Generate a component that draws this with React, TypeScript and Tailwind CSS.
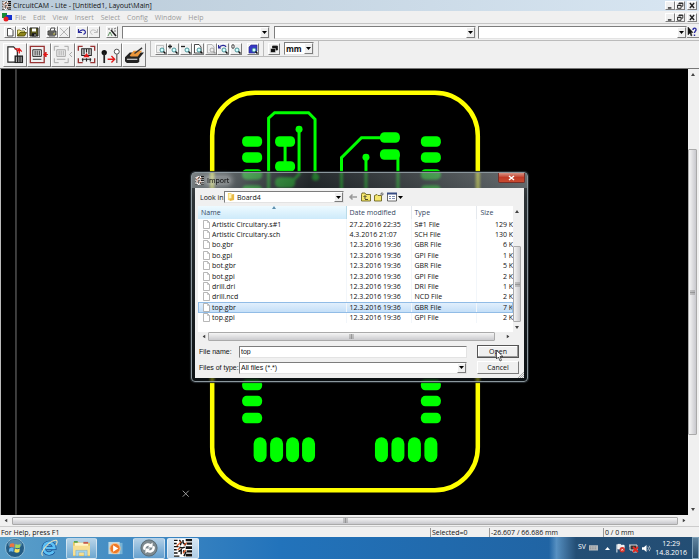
import type { ReactNode } from 'react';

const raised =
  'border border-t-white border-l-white border-b-[#7d7d7d] border-r-[#7d7d7d] bg-[#f0f0f0]';
const sunken =
  'border border-t-[#7d7d7d] border-l-[#7d7d7d] border-b-[#e3e3e3] border-r-[#e3e3e3] bg-white';

const menus = ['File', 'Edit', 'View', 'Insert', 'Select', 'Config', 'Window', 'Help'];

const files = [
  ['Artistic Circuitary.s#1', '27.2.2016 22:35', 'S#1 File', '129 K'],
  ['Artistic Circuitary.sch', '4.3.2016 21:07', 'SCH File', '130 K'],
  ['bo.gbr', '12.3.2016 19:36', 'GBR File', '6 K'],
  ['bo.gpi', '12.3.2016 19:36', 'GPI File', '1 K'],
  ['bot.gbr', '12.3.2016 19:36', 'GBR File', '5 K'],
  ['bot.gpi', '12.3.2016 19:36', 'GPI File', '2 K'],
  ['drill.dri', '12.3.2016 19:36', 'DRI File', '1 K'],
  ['drill.ncd', '12.3.2016 19:36', 'NCD File', '2 K'],
  ['top.gbr', '12.3.2016 19:36', 'GBR File', '7 K'],
  ['top.gpi', '12.3.2016 19:36', 'GPI File', '2 K'],
];

function ToolButton({ label, big, children }: { label: string; big?: boolean; children: ReactNode }) {
  return (
    <button
      type="button"
      aria-label={label}
      className={`flex items-center justify-center ${raised} ${big ? 'h-6' : 'h-3 w-3'}`}
    >
      {children}
    </button>
  );
}

function Glyph({ children, size = 'h-[10px] w-[10px]' }: { children: ReactNode; size?: string }) {
  return (
    <svg viewBox="0 0 10 10" className={`shrink-0 ${size}`} fill="none" stroke="#222" strokeWidth="0.8" aria-hidden="true">
      {children}
    </svg>
  );
}

function DropDown({
  label,
  id,
  value,
  className,
  textClass = '',
}: {
  label?: string;
  id?: string;
  value: string;
  className: string;
  textClass?: string;
}) {
  return (
    <div className={`relative flex ${sunken} ${className}`}>
      <select
        id={id}
        aria-label={label}
        className={`h-full w-full appearance-none bg-transparent outline-none ${textClass}`}
      >
        <option>{value}</option>
      </select>
      <span
        className={`pointer-events-none absolute inset-y-0 right-0 flex w-[9px] items-center justify-center ${raised}`}
      >
        <svg viewBox="0 0 5 3" className="h-[3px] w-[5px]" aria-hidden="true">
          <path d="M0 0H5L2.5 3Z" />
        </svg>
      </span>
    </div>
  );
}

function WindowButtons() {
  return (
    <div className="flex">
      <button type="button" aria-label="Minimize" className={`flex h-[9px] w-[10px] ${raised}`}>
        <Glyph size="h-[7px] w-[8px]">
          <path d="M2 8.5H7" strokeWidth="2" />
        </Glyph>
      </button>
      <button type="button" aria-label="Restore" className={`flex h-[9px] w-[10px] ${raised}`}>
        <Glyph size="h-[7px] w-[8px]">
          <path d="M3.5 3V1.5H9V6H7M1.5 4.5H6.5V9H1.5ZM1.5 5H6.5M3.5 2H9" strokeWidth="1.3" />
        </Glyph>
      </button>
      <button type="button" aria-label="Close" className={`ml-[2px] flex h-[9px] w-[10px] ${raised}`}>
        <Glyph size="h-[7px] w-[8px]">
          <path d="M2 1.5L8 8.5M8 1.5L2 8.5" strokeWidth="2" />
        </Glyph>
      </button>
    </div>
  );
}

function AppIcon({ className }: { className: string }) {
  return (
    <svg viewBox="0 0 20 20" className={`shrink-0 ${className}`} aria-hidden="true">
      <path fill="#fff" d="M0 0H20V20H0Z" />
      <path
        d="M0 1.500H4M0 5H3M0 8.500H5M0 12H3M0 15.500H4M0 19H6M6 1L8 4L7 7M10 1V4L13 7M6 9L9 10L12 9M5 14L8 12V17M10 13L13 15L11 19"
        stroke="#111"
        strokeWidth="1.600"
        fill="none"
      />
      <path
        fill="#111"
        d="M13 0H20V2.500H13ZM14 4H20V6.500H14ZM13 8H20V11H13ZM14 12.500H20V15H14ZM13 16.500H20V19.500H13Z"
      />
      <path d="M3 8L8 3M4 12L7 10M10 16L13 12M11 7L14 4" stroke="#d9531e" strokeWidth="1.300" />
    </svg>
  );
}

function Magnifier({ children, muted }: { children?: ReactNode; muted?: boolean }) {
  return (
    <Glyph>
      {children}
      <circle cx="6" cy="6" r="2" stroke={muted ? '#999' : '#2b7d83'} fill={muted ? '#eee' : '#d5ffff'} />
      <path d="M7.500 7.500L9.500 9.500" strokeWidth="1.500" stroke={muted ? '#999' : '#111'} />
    </Glyph>
  );
}

function Board() {
  const sideRows = [141, 157, 174, 190, 385, 401, 418];
  return (
    <svg viewBox="0 69 688 446" className="block h-full w-full" aria-label="Layout">
      <path d="M15 69V515" stroke="#777" />
      <rect x="211.500" y="92.500" width="266" height="398" rx="43" fill="none" stroke="#ff0" strokeWidth="4.500" />
      <g fill="#0f0">
        {sideRows.map((y) => (
          <g key={y}>
            <rect x="241.500" y={y - 5} width="20" height="10.500" rx="4.500" />
            <rect x="420.500" y={y - 5} width="20" height="10.500" rx="4.500" />
          </g>
        ))}
        {[141, 166, 182].map((y) => (
          <rect key={y} x="274.500" y={y - 5} width="20" height="10.500" rx="4.500" />
        ))}
        {[137, 154].map((y) => (
          <rect key={y} x="379.500" y={y - 5} width="20" height="10.500" rx="4.500" />
        ))}
        {[259.5, 276, 292, 308, 381, 397.5, 414, 430.5].map((x) => (
          <rect key={x} x={x - 6.5} y="437.500" width="13" height="25" rx="6.500" />
        ))}
        <circle cx="298.500" cy="129" r="3.500" />
        <circle cx="315" cy="177" r="3.500" />
        <circle cx="365.500" cy="157" r="3.500" />
      </g>
      <g fill="none" stroke="#0f0" strokeWidth="3">
        <path d="M268 190V118L274 112.500H308L314.500 119V177" />
        <path d="M298.500 129V174L290 183M284.500 141V166" />
        <path d="M341 190V157.500L361 137.500H384M365.500 157V190M397.500 155V190" />
      </g>
      <path d="M182 491L188 497M188 491L182 497" stroke="#aaa" strokeWidth="0.900" />
    </svg>
  );
}

function Grip({ upright }: { upright?: boolean }) {
  return (
    <svg viewBox="0 0 5 5" className={`h-[5px] w-[5px] ${upright ? 'rotate-90' : ''}`} aria-hidden="true">
      <path d="M0 1H5M0 2.500H5M0 4H5" stroke="#777" strokeWidth="0.700" />
    </svg>
  );
}

function Arrow({ turn, tint = '#444' }: { turn: string; tint?: string }) {
  return (
    <svg viewBox="0 0 4 3" className={`h-[3px] w-[4px] shrink-0 ${turn}`} aria-hidden="true">
      <path d="M0 3H4L2 0Z" fill={tint} />
    </svg>
  );
}

function ImportDialog() {
  return (
    <section
      role="dialog"
      aria-label="Import"
      className="absolute top-[172px] left-[191px] flex w-[337px] flex-col rounded-[4px] border border-[#8b979d] bg-linear-to-b from-[#b5c0c6]/40 via-[#59656c]/50 via-12% to-[#11181c]/70 px-[3px] pb-[3px] shadow-[0_0_1px_1px_#252b30] backdrop-blur-[1px]"
    >
      <header className="-mx-[3px] flex h-[15px] items-center rounded-t-[3px] bg-linear-to-r from-[#aeb7ba]/50 via-[#060b0e]/50 via-35% to-[#8b9295]/50 pl-[3px]">
        <AppIcon className="h-[9px] w-[9px]" />
        <h2 className="ml-[1px] rounded-full bg-white/25 px-[2px] text-[7px] leading-[9px] text-black shadow-[0_0_4px_2px_rgba(255,255,255,0.25)]">
          Import
        </h2>
        <button
          type="button"
          aria-label="Close import"
          className="mr-[2px] mb-auto ml-auto flex h-[10px] w-[27px] items-center justify-center rounded-b-[2px] border border-t-0 border-[#772e28] bg-linear-to-b from-[#d79184] via-[#c03a27] to-[#c94b30]"
        >
          <svg viewBox="0 0 7 6" className="h-[6px] w-[7px]" aria-hidden="true">
            <path d="M1 1L6 5M6 1L1 5" stroke="#fff" strokeWidth="1.500" />
          </svg>
        </button>
      </header>

      <div className="relative flex flex-col bg-[#f0f0f0] px-[3px] pt-[3px] pb-1">
        <div className="flex h-3 items-center">
          <label htmlFor="folder" className="w-[26px] pl-[2px] whitespace-nowrap">
            Look in:
          </label>
          <div className="relative">
            <DropDown id="folder" value="Board4" className="h-3 w-[120px]" textClass="pl-3" />
            <svg viewBox="0 0 9 9" className="pointer-events-none absolute top-[2px] left-[3px] h-2 w-2" aria-hidden="true">
              <path d="M1 0H5V8H1Z" fill="#f6d873" />
              <path d="M3 2L8 1V8L3 9Z" fill="#e7b944" />
              <path d="M2 1H5V6H2Z" fill="#fff2b5" />
            </svg>
          </div>
          <div className="ml-1 flex items-center gap-[3px]">
            <button type="button" aria-label="Back" className="h-[10px] w-[10px]">
              <Glyph>
                <path d="M9 5H2M4.500 2.500L2 5L4.500 7.500" stroke="#999" strokeWidth="1.500" />
              </Glyph>
            </button>
            <button type="button" aria-label="Up one level" className="h-[10px] w-[10px]">
              <Glyph>
                <path d="M.5 2.500V9H9.500V2.500H5L4 1H1Z" fill="#f5e66e" stroke="#5b5310" />
                <path d="M4 7V4M2.500 5L4 3.500L5.500 5M4 7.500H7" />
              </Glyph>
            </button>
            <button type="button" aria-label="New folder" className="h-[10px] w-[10px]">
              <Glyph>
                <path d="M.5 3.500V9H7.500V3.500H4L3 2.500Z" fill="#f5e66e" stroke="#5b5310" />
                <path d="M8 0V4M6 2H10M7 1L9 3" stroke="#777" strokeWidth="0.800" />
              </Glyph>
            </button>
            <button type="button" aria-label="Views" className="flex h-[10px] items-center gap-[1px]">
              <Glyph>
                <path d="M.5 1.500H9.500V9H.5Z" fill="#fff" stroke="#444" />
                <path d="M0 1.500H10" stroke="#394d84" strokeWidth="2" />
                <path d="M2 4.500H4M5 4.500H8M2 6.500H4M5 6.500H8" stroke="#60709d" />
              </Glyph>
              <svg viewBox="0 0 5 3" className="h-[3px] w-[5px]" aria-hidden="true">
                <path d="M0 0H5L2.500 3Z" />
              </svg>
            </button>
          </div>
        </div>

        <div className="mt-[3px] flex bg-white">
          <div className="min-w-0 flex-1 overflow-hidden">
            <table className="h-[117px] w-full table-fixed border-collapse text-[7px] leading-[9px] text-[#111]">
              <thead>
                <tr className="h-[13px] text-[#33455e]">
                  <th className="relative w-[148px] border-r border-[#b9dbe8] bg-linear-to-b from-[#eefaff] to-[#cdeafa] p-0 pl-[3px] text-left font-normal">
                    Name
                    <span className="absolute top-0 left-1/2 flex">
                      <Arrow turn="" tint="#5d8fae" />
                    </span>
                  </th>
                  <th className="w-[65px] border-r border-[#e5e9ee] p-0 pl-[3px] text-left font-normal whitespace-nowrap">
                    Date modified
                  </th>
                  <th className="w-[65px] border-r border-[#e5e9ee] p-0 pl-[3px] text-left font-normal">Type</th>
                  <th className="p-0 pl-1 text-left font-normal">Size</th>
                </tr>
              </thead>
              <tbody>
                {files.map(([name, date, type, size]) => (
                  <tr
                    key={name}
                    className={
                      name === 'top.gbr'
                        ? 'bg-linear-to-b from-[#e5f1fd] to-[#c4dff8] outline outline-[#91bce6] -outline-offset-1'
                        : ''
                    }
                  >
                    <td className="border-r border-[#f2f6fa] p-0 pl-[5px]">
                      <span className="flex items-center gap-[2px] whitespace-nowrap">
                        <svg viewBox="0 0 7 9" className="h-[9px] w-[7px] shrink-0" aria-hidden="true">
                          <path d="M.5 .5H4.500L6.500 2.500V8.500H.5Z" fill="#fff" stroke="#a5a5a5" strokeWidth="0.800" />
                          <path d="M4.500 .5V2.500H6.500" fill="none" stroke="#a5a5a5" strokeWidth="0.600" />
                        </svg>
                        {name}
                      </span>
                    </td>
                    <td className="border-r border-[#f2f6fa] p-0 pl-[3px] whitespace-nowrap">{date}</td>
                    <td className="border-r border-[#f2f6fa] p-0 pl-[3px] whitespace-nowrap">{type}</td>
                    <td className="p-0 text-right whitespace-nowrap">{size}</td>
                  </tr>
                ))}
              </tbody>
            </table>
          </div>
          <div className="flex w-2 flex-col items-center bg-[#f0f0f0] pt-1">
            <Arrow turn="" />
            <div className="mt-[33px] flex h-[76px] w-2 items-center justify-center rounded-[1px] border border-[#aaa] bg-linear-to-r from-[#f5f5f5] to-[#cbcbce]">
              <Grip />
            </div>
            <div className="mt-1 mb-[3px] flex">
              <Arrow turn="rotate-180" />
            </div>
          </div>
        </div>
        <div className="flex h-[9px] items-center pl-1">
          <Arrow turn="-rotate-90" />
          <div className="ml-[2px] flex h-[9px] w-[287px] items-center justify-center rounded-[1px] border border-[#aaa] bg-linear-to-b from-[#f5f5f5] to-[#cbcbce]">
            <Grip upright />
          </div>
          <span className="ml-[11px] flex">
            <Arrow turn="rotate-90" />
          </span>
        </div>

        <div className="mt-1 flex h-[13px] items-center">
          <label htmlFor="filename" className="w-[41px] pl-[1px] font-['Liberation_Sans',sans-serif] whitespace-nowrap">
            File name:
          </label>
          <input
            id="filename"
            defaultValue="top"
            className={`h-3 w-[228px] px-[1px] font-['Liberation_Sans',sans-serif] outline-none ${sunken}`}
          />
          <button
            type="button"
            className="ml-[10px] h-[13px] w-[42px] border border-[#555] bg-[#f0f0f0] text-[7px] leading-[9px] shadow-[inset_-1px_-1px_0_#999,inset_1px_1px_0_#fff]"
          >
            Open
          </button>
        </div>
        <div className="mt-[3px] flex h-[13px] items-center">
          <label htmlFor="filetype" className="w-[41px] pl-[1px] font-['Liberation_Sans',sans-serif] whitespace-nowrap">
            Files of type:
          </label>
          <DropDown
            id="filetype"
            value="All files (*.*)"
            className="h-3 w-[228px]"
            textClass="pl-[1px] font-['Liberation_Sans',sans-serif]"
          />
          <button type="button" className={`ml-[10px] h-[13px] w-[42px] text-[7px] leading-[9px] ${raised}`}>
            Cancel
          </button>
        </div>
        <svg viewBox="0 0 6 6" className="absolute right-0 bottom-0 h-[6px] w-[6px]" aria-hidden="true">
          <path d="M0 6L6 0M2 6L6 2M4 6L6 4" stroke="#999" strokeWidth="0.800" />
        </svg>
      </div>
    </section>
  );
}

function MainToolbar() {
  return (
    <div className="flex h-[17px] items-center border-t border-[#c5c5c5] pl-1">
      <ToolButton label="New">
        <Glyph>
          <path d="M2.500 1.500H6L8 3.500V9H2.500Z" fill="#fff" />
        </Glyph>
      </ToolButton>
      <ToolButton label="Open file">
        <Glyph>
          <path d="M.5 9V3H3L4 4H7.500V5.500" fill="#efe88c" stroke="#6d6810" />
          <path d="M.5 9L3 5.500H9.500L7.500 9Z" fill="#8e8519" stroke="#494500" />
          <path d="M5 2L7 1L9 3" />
        </Glyph>
      </ToolButton>
      <ToolButton label="Save">
        <Glyph>
          <path d="M1 1H9V9H1Z" fill="#5d5b1b" strokeWidth="1" />
          <path d="M3 1.500H7V4.500H3Z" fill="#fff" stroke="none" />
          <path d="M3 6.500H7V9H3Z" fill="#111" />
          <path d="M6 7V9" stroke="#ddd" />
        </Glyph>
      </ToolButton>
      <span className="w-[6px]" />
      <ToolButton label="Print">
        <Glyph>
          <path d="M3 4L4 1H8L7 4" fill="#fff" />
          <path d="M1 4H9V8H1Z" fill="#8a8a84" />
          <path d="M2 9H8M2 6H7" />
          <path d="M6 7H8" stroke="#e2d743" />
        </Glyph>
      </ToolButton>
      <ToolButton label="Delete">
        <Glyph>
          <path d="M1 1L9 9M9 1L1 9" stroke="#a5a5a5" />
        </Glyph>
      </ToolButton>
      <span className="w-[6px]" />
      <ToolButton label="Undo">
        <Glyph>
          <path d="M1.500 2V5.500H5M2 5C4 2.500 8 2 8.500 5C8.500 6.500 7.500 7 6.500 7.500" stroke="#29299b" strokeWidth="1.200" />
        </Glyph>
      </ToolButton>
      <ToolButton label="Redo">
        <Glyph>
          <path d="M8.500 2V5.500H5M8 5C6 2.500 2 2 1.500 5C1.500 6.500 2.500 7 3.500 7.500" stroke="#b1b1b1" />
        </Glyph>
      </ToolButton>
      <span className="w-[6px]" />
      <ToolButton label="Wizard">
        <Glyph>
          <path d="M4 3L9 9" strokeWidth="1.600" />
          <path d="M1 9L3 5L5 9" stroke="#3a793a" />
          <path d="M1 2H3M5 1V3M7 2L9 1M7 4H9" stroke="#555" />
        </Glyph>
      </ToolButton>
      <DropDown label="Layer" value="" className="ml-1 h-[13px] w-[148px]" />
      <DropDown label="Aperture" value="" className="ml-1 h-[13px] w-[202px]" />
      <DropDown label="Tool" value="" className="ml-[2px] h-[13px] min-w-0 flex-1" />
      <button type="button" aria-label="Context help" className="flex h-3 w-3 items-center border-b border-[#888] bg-[#f0f0f0]">
        <Glyph>
          <path d="M1 0V8L3 6L4 9L5 8.500L4 5.500H6Z" fill="#111" strokeWidth="0.500" />
          <path d="M6 3C6 0 9.500 1 9 3C8.500 4.500 7.500 4.500 7.500 6M7.500 7.500V9" stroke="#2a2aa0" strokeWidth="1.400" />
        </Glyph>
      </button>
    </div>
  );
}

function ViewToolbar() {
  return (
    <div className="flex h-[29px] border-y border-t-[#bbb] border-b-[#777]">
      <div className="grid w-[146px] grid-cols-6 items-center pl-[3px]">
        <ToolButton label="Import file" big>
          <Glyph size="h-[19px] w-[19px]">
            <path d="M1.500 1H4.500L6.500 3V9H1.500Z" fill="#fff" strokeWidth="0.600" />
            <path d="M5 5.500H9.500V9.500H5Z" fill="#222" stroke="none" />
            <path d="M6 6.200V9M7.300 6.200V9M8.500 6.200V9" stroke="#eee" strokeWidth="0.400" />
            <path d="M5 2H7.500V4.500M6.300 3.500L7.500 2L8.800 3.500" stroke="#e31919" strokeWidth="0.700" />
          </Glyph>
        </ToolButton>
        <ToolButton label="Board outline" big>
          <Glyph size="h-[19px] w-[19px]">
            <path d="M.7 .7H8V9.300H.7Z" stroke="#993434" strokeWidth="0.700" />
            <path d="M2 2.500H6.500V6H2ZM3.200 3V5.500M4.300 3V5.500M5.400 3V5.500M2 7.500H6.500" strokeWidth="0.500" />
            <path d="M10 5H8M9 3.700L7.700 5L9 6.300Z" fill="#e31919" stroke="#e31919" strokeWidth="0.500" />
          </Glyph>
        </ToolButton>
        <ToolButton label="Contour routing" big>
          <Glyph size="h-[19px] w-[19px]">
            <path
              d="M3 .7H.7V3M.7 7V9.300H3M6 .7H8V3M8 7V9.300H6M2 2.500H6.500V6H2ZM3.200 3V5.500M4.300 3V5.500M5.400 3V5.500M2 7.500H6.500M10 3.700L8.700 5L10 6.300"
              stroke="#a5a5a5"
              strokeWidth="0.500"
            />
          </Glyph>
        </ToolButton>
        <ToolButton label="Insulate" big>
          <Glyph size="h-[19px] w-[19px]">
            <path d="M3 .7H.7V3M.7 7V9.300H3M7 .7H9.300V3M9.300 7V9.300H7" stroke="#993434" strokeWidth="0.700" />
            <path d="M2.500 2H7.500V5.500H2.500ZM3.700 2V5M5 2V4M6.300 2V5M2.500 7.500H7.500M3 7V8.700M7 7V8.700M5 7V8.700" strokeWidth="0.600" />
            <path d="M3.300 6.500L5 4.200L6.700 6.500Z" fill="#e31919" stroke="none" />
          </Glyph>
        </ToolButton>
        <ToolButton label="Convert layer" big>
          <Glyph size="h-[19px] w-[19px]">
            <circle cx="1.700" cy="4" r="1.400" fill="#111" stroke="none" />
            <path d="M1.700 4V9.500" strokeWidth="0.900" />
            <circle cx="8.300" cy="3.500" r="1.300" strokeWidth="0.400" fill="#fff" />
            <path d="M8.300 4.800V9.500" stroke="#777" strokeWidth="0.800" />
            <path d="M3.500 7.500H7M5.500 5.800L7.200 7.500L5.500 9.200" stroke="#e31919" strokeWidth="0.700" />
          </Glyph>
        </ToolButton>
        <ToolButton label="Export to plotter" big>
          <Glyph size="h-[19px] w-[19px]">
            <path d="M0 6.500L2.500 4H10L7.500 7V9L6.500 9.500H1L0 8.500Z" fill="#222" stroke="none" />
            <path d="M2.500 5.500L4.500 3H9L6.700 6H3Z" fill="#e9953a" stroke="none" />
            <path d="M5 4.500L9 1.500" stroke="#333" strokeWidth="0.700" />
            <path d="M1 7.500H6.500" stroke="#fff" strokeWidth="0.500" />
          </Glyph>
        </ToolButton>
      </div>
      <div className="ml-1 flex h-4 items-center border-r border-b border-l border-[#bbb] pr-1 pl-1">
        <div className="grid w-[87px] grid-cols-7">
          <ToolButton label="Zoom window">
            <Magnifier>
              <path d="M.5 1.500H7.500V8.500H.5Z" stroke="#aaa" strokeWidth="0.700" />
            </Magnifier>
          </ToolButton>
          <ToolButton label="Zoom in">
            <Magnifier>
              <path d="M0 2.500H4M2 .5V4.500" strokeWidth="1.300" />
            </Magnifier>
          </ToolButton>
          <ToolButton label="Zoom out">
            <Magnifier>
              <path d="M0 2.500H4" strokeWidth="1.300" />
            </Magnifier>
          </ToolButton>
          <ToolButton label="Zoom page">
            <Magnifier>
              <path d="M1.500 .5H6L8 3V9H1.500Z" fill="#fff" />
            </Magnifier>
          </ToolButton>
          <ToolButton label="Zoom selection">
            <Magnifier muted>
              <path d="M1.500 .5H6L8 3V9H1.500Z" stroke="#aaa" />
            </Magnifier>
          </ToolButton>
          <ToolButton label="Zoom previous">
            <Magnifier>
              <path d="M.5 1V4H3M1 3.500C3 1 7 .5 8 3" stroke="#29299b" strokeWidth="1.200" />
            </Magnifier>
          </ToolButton>
          <ToolButton label="Zoom original">
            <Magnifier>
              <ellipse cx="2" cy="2.500" rx="1.200" ry="2" />
            </Magnifier>
          </ToolButton>
        </div>
        <span className="w-[5px]" />
        <ToolButton label="Redraw">
          <Magnifier>
            <path d="M1 3L3 1H9V7L7 9H1Z" fill="#3939c5" stroke="#25258c" strokeWidth="0.600" />
          </Magnifier>
        </ToolButton>
        <span className="mx-1 h-full border-l border-[#bbb]" />
        <ToolButton label="Layers">
          <Glyph>
            <path d="M3.500 2H8.500V6H3.500Z" fill="#111" />
            <path d="M1.500 4.500H6.500V8.500H1.500Z" fill="#111" stroke="#f0f0f0" strokeWidth="0.500" />
          </Glyph>
        </ToolButton>
        <DropDown label="Units" value="mm" className="ml-1 h-[13px] w-[30px]" textClass="pl-[1px] text-[8px] font-bold leading-[9px]" />
      </div>
    </div>
  );
}

function Taskbar() {
  const lit =
    'flex h-[21px] items-center justify-center rounded-[2px] border border-white/50 bg-linear-to-b';
  return (
    <footer className="flex h-[22px] shrink-0 items-center bg-linear-to-r from-[#5b9fc9] via-[#2273bb] via-40% to-[#1f5c97] text-white">
      <button type="button" aria-label="Start" className="ml-1 flex h-[21px] w-[22px] items-center justify-center">
        <svg viewBox="0 0 20 20" className="h-5 w-5" aria-hidden="true">
          <circle cx="10" cy="10" r="9.500" fill="#245d85" stroke="#a1c9df" strokeWidth="0.800" />
          <ellipse cx="10" cy="6" rx="7" ry="4.500" fill="#79abc9" opacity=".6" />
          <path d="M5 6Q7.500 4.500 9.500 6L9 9.500Q7 8 4.500 9.500Z" fill="#ee7540" />
          <path d="M10.500 6Q13 7.500 15.500 6L15 9.500Q12.500 11 10 9.500Z" fill="#a9d95a" />
          <path d="M4.300 10.500Q6.500 9 8.800 10.500L8.300 14Q6 12.500 3.800 14Z" fill="#69b5ee" />
          <path d="M9.800 10.500Q12.500 12 14.800 10.500L14.300 14Q12 15.500 9.300 14Z" fill="#fae15d" />
        </svg>
      </button>
      <button type="button" aria-label="Internet Explorer" className="ml-3 flex h-[21px] w-[21px] items-center justify-center">
        <svg viewBox="0 0 20 20" className="h-[18px] w-[18px]" fill="none" aria-hidden="true">
          <path d="M15 13.500A6 6 0 1 1 16 10H6" stroke="#174f93" strokeWidth="4.500" />
          <path d="M15 13.500A6 6 0 1 1 16 10H6" stroke="#5cc0f5" strokeWidth="3" />
          <path d="M3 18.500C-1 15 11 1 18 1.500C20 2.500 18.500 5.500 17.500 7" stroke="#e8e3c0" strokeWidth="1.200" />
        </svg>
      </button>
      <button type="button" aria-label="Explorer" className={`ml-[7px] w-[31px] from-white/60 to-white/20 ${lit}`}>
        <svg viewBox="0 0 20 18" className="h-[17px] w-[19px]" aria-hidden="true">
          <path d="M1 2H7L8 3H19V17H1Z" fill="#e7c967" />
          <path d="M3 3H17V9H3Z" fill="#fff5c9" />
          <path d="M2 1H6V3H2ZM8 2H12" fill="#57a553" />
          <path d="M12 2H17V4H12Z" fill="#c4594b" />
          <path d="M1 6H19V16H1Z" fill="#f8df91" />
          <path d="M4 17V11H16V17H13V13H7V17Z" fill="#a3d5ef" stroke="#6ba6c9" strokeWidth="0.500" />
        </svg>
      </button>
      <button type="button" aria-label="Media Player" className="ml-[7px] flex h-[21px] w-[21px] items-center justify-center">
        <svg viewBox="0 0 18 16" className="h-[15px] w-[18px]" aria-hidden="true">
          <path d="M5 2H17V14H5Z" fill="#79b4d6" />
          <path d="M2 1H14V14H2Z" fill="#bdd9e6" />
          <circle cx="9" cy="8" r="5.500" fill="#ee7927" stroke="#fcc58d" />
          <path d="M7 4.500L12.500 8L7 11.500Z" fill="#fff" />
        </svg>
      </button>
      <button type="button" aria-label="Sync" className={`ml-2 w-8 from-white/60 to-white/20 ${lit}`}>
        <svg viewBox="0 0 20 20" className="h-[18px] w-[18px]" aria-hidden="true">
          <circle cx="10" cy="10" r="9" fill="#7d898f" stroke="#55666f" />
          <path d="M3.500 11C3 6 8 3 12 5.500L14 4V9.500H8.500L10.500 7.500C8 7 6 8.500 6 11.500C5.500 12.500 4 12.500 3.500 11Z" fill="#fff" />
          <path d="M16.500 9C17 14 12 17 8 14.500L6 16V10.500H11.500L9.500 12.500C12 13 14 11.500 14 8.500C14.500 7.500 16 7.500 16.500 9Z" fill="#fff" />
        </svg>
      </button>
      <button type="button" aria-label="CircuitCAM" className={`ml-[2px] w-8 from-white/80 to-white/60 ${lit}`}>
        <AppIcon className="h-[18px] w-[18px]" />
      </button>
      <div className="ml-auto flex h-full w-[150px] items-center bg-linear-to-r from-transparent via-[#8dbce0]/50 via-5% to-[#244c70]/90 to-18% pl-[29px]">
        <span className="mb-[3px]">SV</span>
        <svg viewBox="0 0 10 8" className="mb-[2px] ml-[3px] h-2 w-[9px]" aria-hidden="true">
          <path d="M5 2V0M0 2H10V8H0Z" fill="#b8bdc0" />
          <path d="M1 4H9M1 6H9" stroke="#666" strokeWidth="0.800" strokeDasharray="1 1" />
        </svg>
        <span className="ml-[7px] flex">
          <svg viewBox="0 0 5 3" className="h-[3px] w-[5px]" aria-hidden="true">
            <path d="M0 3H5L2.500 0Z" fill="#fff" />
          </svg>
        </span>
        <svg viewBox="0 0 10 10" className="ml-[6px] h-[10px] w-[9px]" aria-hidden="true">
          <path d="M1 1V10M2 1H5L6 2H9V6H2Z" stroke="#fff" fill="#eee" />
          <circle cx="7" cy="7" r="3" fill="#d3352c" />
          <path d="M6 6L8 8M8 6L6 8" stroke="#fff" strokeWidth="0.800" />
        </svg>
        <svg viewBox="0 0 10 10" className="ml-1 h-[10px] w-[10px]" aria-hidden="true">
          <path d="M1 2H8V7H1ZM0 1V4M4 7V9H8" stroke="#ddd" fill="#333" />
          <path d="M4 4L9 9M9 4L4 9" stroke="#e42922" strokeWidth="1.800" />
        </svg>
        <svg viewBox="0 0 10 10" className="ml-[3px] h-[9px] w-[9px]" aria-hidden="true">
          <path d="M0 3.500H2L5 1V9L2 6.500H0Z" fill="#fff" />
          <path d="M6.500 3Q8 5 6.500 7M8 2Q10.500 5 8 8" stroke="#ddd" fill="none" strokeWidth="0.800" />
        </svg>
        <time className="ml-auto flex flex-col items-center">
          <span>12:29</span>
          <span>14.8.2016</span>
        </time>
        <button
          type="button"
          aria-label="Show desktop"
          className="ml-[5px] h-[22px] w-[7px] shrink-0 border border-[#7da0b8] bg-linear-to-b from-[#8aa8bb]/60 to-[#294e6b]"
        />
      </div>
    </footer>
  );
}

export default function App() {
  return (
    <div className="relative flex h-screen flex-col overflow-hidden bg-[#f0f0f0] font-['Open_Sans',sans-serif] text-[7px] leading-[9px] text-[#111]">
      <header className="flex h-[11px] shrink-0 items-center justify-between bg-linear-to-r from-[#b9cad8] to-[#d8e6f2] pr-[2px] pl-[2px]">
        <div className="flex items-center gap-[2px]">
          <AppIcon className="h-[9px] w-[9px]" />
          <h1>CircuitCAM - Lite - [Untitled1, Layout\Main]</h1>
        </div>
        <WindowButtons />
      </header>
      <nav className="flex h-3 shrink-0 items-center pr-[2px] pl-[2px] text-[#9b9b9b]">
        <svg viewBox="0 0 10 9" className="h-[9px] w-[10px]" aria-hidden="true">
          <path d="M0 0H5V5H0Z" fill="#158a36" />
          <path d="M4 2H10V7H4Z" fill="#1530ce" />
          <circle cx="4" cy="6" r="2.500" fill="#e51e22" />
        </svg>
        <div className="ml-[3px] flex flex-1 gap-[7px]">
          {menus.map((m) => (
            <button key={m} type="button">
              {m}
            </button>
          ))}
        </div>
        <WindowButtons />
      </nav>
      <MainToolbar />
      <ViewToolbar />
      <main className="flex min-h-0 flex-1">
        <div className="min-w-0 flex-1 border-l border-[#bbb] bg-black">
          <Board />
        </div>
        <div className="flex w-[11px] flex-col items-center pt-1 pr-[2px] pb-1">
          <Arrow turn="" />
          <div className="mt-[73px] mb-[73px] flex w-[9px] flex-1 items-center justify-center rounded-[1px] border border-[#aaa] bg-linear-to-r from-[#f5f5f5] to-[#c8c8cd]">
            <Grip />
          </div>
          <Arrow turn="rotate-180" />
        </div>
      </main>
      <div className="flex h-[11px] shrink-0 items-center pr-[13px] pl-1">
        <Arrow turn="-rotate-90" />
        <div className="mr-1 ml-1 flex h-[8px] flex-1 items-center justify-center rounded-[1px] border border-[#aaa] bg-linear-to-b from-[#f5f5f5] to-[#c8c8cd]">
          <Grip upright />
        </div>
        <Arrow turn="rotate-90" />
      </div>
      <div className="flex h-[11px] shrink-0 items-center border-t border-[#ccc] pr-1">
        <span className="flex-1 pl-[1px]">For Help, press F1</span>
        <span className="w-[59px] border-l border-[#999] pl-[1px]">Selected=0</span>
        <span className="w-[114px] border-l border-[#999] pl-[1px]">-26.607 / 66.686 mm</span>
        <span className="w-[92px] border-l border-[#999] pl-[1px]">0 / 0 mm</span>
      </div>
      <Taskbar />
      <ImportDialog />
      <svg viewBox="0 0 8 12" className="pointer-events-none absolute top-[350px] left-[496px] h-3 w-2" aria-hidden="true">
        <path d="M.5 .5V9L2.500 7L4 11L5.500 10.300L4 6.500H7Z" fill="#fff" stroke="#222" strokeWidth="0.700" />
      </svg>
    </div>
  );
}
